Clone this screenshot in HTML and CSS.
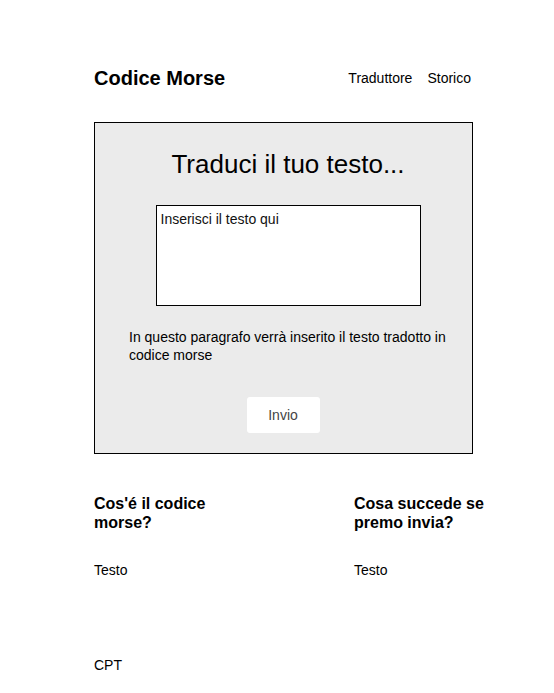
FILE: index.html
```html
<!DOCTYPE html>
<html lang="it">
<head>
<meta charset="utf-8">
<title>Codice Morse</title>
<link rel="stylesheet" href="styles.css">
</head>
<body>
<div class="page">
  <header class="header">
    <div class="logo">Codice Morse</div>
    <nav class="nav">
      <a href="#">Traduttore</a>
      <a href="#">Storico</a>
    </nav>
  </header>
  <main class="box">
    <h1 class="title">Traduci il tuo testo...</h1>
    <textarea class="input">Inserisci il testo qui</textarea>
    <p class="result">In questo paragrafo verrà inserito il testo tradotto in codice morse</p>
    <div class="actions"><button class="btn">Invio</button></div>
  </main>
  <section class="info">
    <div class="col">
      <h2>Cos'é il codice morse?</h2>
      <p>Testo</p>
    </div>
    <div class="col">
      <h2>Cosa succede se premo invia?</h2>
      <p>Testo</p>
    </div>
  </section>
  <footer class="footer">CPT</footer>
</div>
</body>
</html>
```
FILE: styles.css
```css
* { box-sizing: border-box; }
html, body { margin: 0; padding: 0; background: #fff; }
body { font-family: "Liberation Sans", Arial, sans-serif; color: #000; font-size: 14px; }
.page { width: 379px; margin-left: 94px; padding-top: 67px; }
.header { display: flex; justify-content: space-between; align-items: center; padding-right: 2px; }
.logo { font-size: 20px; font-weight: bold; line-height: 23px; }
.nav { display: flex; gap: 15px; margin-bottom: 2px; }
.nav a { color: #000; text-decoration: none; font-size: 14px; line-height: 16px; }
.box { margin-top: 32px; border: 1px solid #000; background: #ebebeb; padding: 26px 25px 20px 34px; display: flex; flex-direction: column; }
.title { margin: 0; font-size: 26px; font-weight: normal; line-height: 30px; text-align: center; }
.input { display: block; margin: 26px auto 0; width: 265px; height: 101px; border: 1px solid #000; background: #fff; padding: 5px 4px; font-family: "Liberation Sans", Arial, sans-serif; font-size: 14px; line-height: 16px; color: #111; resize: none; }
.result { margin: 22px 0 0; line-height: 18px; }
.actions { display: flex; justify-content: center; margin-top: 33px; padding-right: 10px; }
.btn { width: 73px; height: 36px; border: none; border-radius: 3px; background: #fff; color: #444; font-family: "Liberation Sans", Arial, sans-serif; font-size: 14px; padding: 0; }
.info { display: flex; gap: 120px; margin-top: 40px; }
.col { width: 140px; flex-shrink: 0; }
.col h2 { margin: 0; font-size: 16px; line-height: 19px; font-weight: bold; }
.col p { margin: 30px 0 0; line-height: 16px; }
.footer { margin-top: 79px; line-height: 16px; }
```
